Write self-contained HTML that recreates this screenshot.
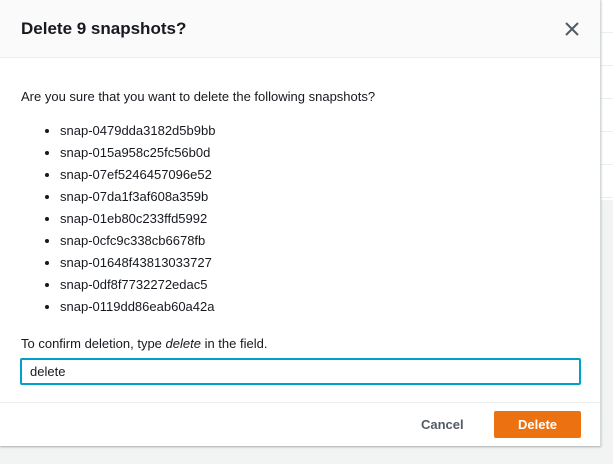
<!DOCTYPE html>
<html><head><style>
body{margin:0;width:613px;height:464px;background:#f2f3f3;font-family:"Liberation Sans",sans-serif;position:relative;overflow:hidden;color:#16191f}
.bgt{position:absolute;left:601px;top:0;width:12px;height:200px;background:#fff}
.bgt div{height:32px;border-bottom:1px solid #e4f0f4}
.modal{position:absolute;left:0;top:0;width:600px;height:446px;background:#fff;border-right:1px solid #d5dbdb;box-shadow:0 1px 2px rgba(0,0,0,.3)}
.hd{height:57px;background:#fafafa;border-bottom:1px solid #eaeded;position:relative}
.hd h1{margin:0;position:absolute;left:21px;top:19px;font-size:17px;font-weight:bold}
.x{position:absolute;left:565px;top:22px}
.p{position:absolute;left:21px;top:89px;font-size:13px}
ul{position:absolute;left:21px;top:123px;margin:0;padding-left:39px;font-size:13px}
li{height:22px;line-height:16px}
.c{position:absolute;left:21px;top:336px;font-size:13px}
.in{position:absolute;left:20px;top:358px;width:557px;height:23px;border:2px solid #00a1c9;border-radius:2px;font-size:13px;line-height:23px;padding-left:8px;box-sizing:content-box;width:549px}
.ft{position:absolute;left:0;top:402px;width:600px;border-top:1px solid #eaeded}
.cancel{position:absolute;left:421px;top:417px;font-size:13px;font-weight:bold;color:#545b64}
.del{position:absolute;left:494px;top:411px;width:87px;height:27px;background:#ec7211;border-radius:2px;color:#fff;font-weight:bold;font-size:13px;text-align:center;line-height:27px}
</style></head><body>
<div class="bgt"><div></div><div></div><div></div><div></div><div></div><div></div></div>
<div class="modal">
<div class="hd"><h1>Delete 9 snapshots?</h1>
<svg class="x" width="14" height="14" viewBox="0 0 14 14"><path d="M1 1L13 13M13 1L1 13" stroke="#545b64" stroke-width="2"/></svg></div>
<div class="p">Are you sure that you want to delete the following snapshots?</div>
<ul><li>snap-0479dda3182d5b9bb</li><li>snap-015a958c25fc56b0d</li><li>snap-07ef5246457096e52</li><li>snap-07da1f3af608a359b</li><li>snap-01eb80c233ffd5992</li><li>snap-0cfc9c338cb6678fb</li><li>snap-01648f43813033727</li><li>snap-0df8f7732272edac5</li><li>snap-0119dd86eab60a42a</li></ul>
<div class="c">To confirm deletion, type <i>delete</i> in the field.</div>
<div class="in">delete</div>
<div class="ft"></div>
<div class="cancel">Cancel</div>
<div class="del">Delete</div>
</div>
</body></html>
